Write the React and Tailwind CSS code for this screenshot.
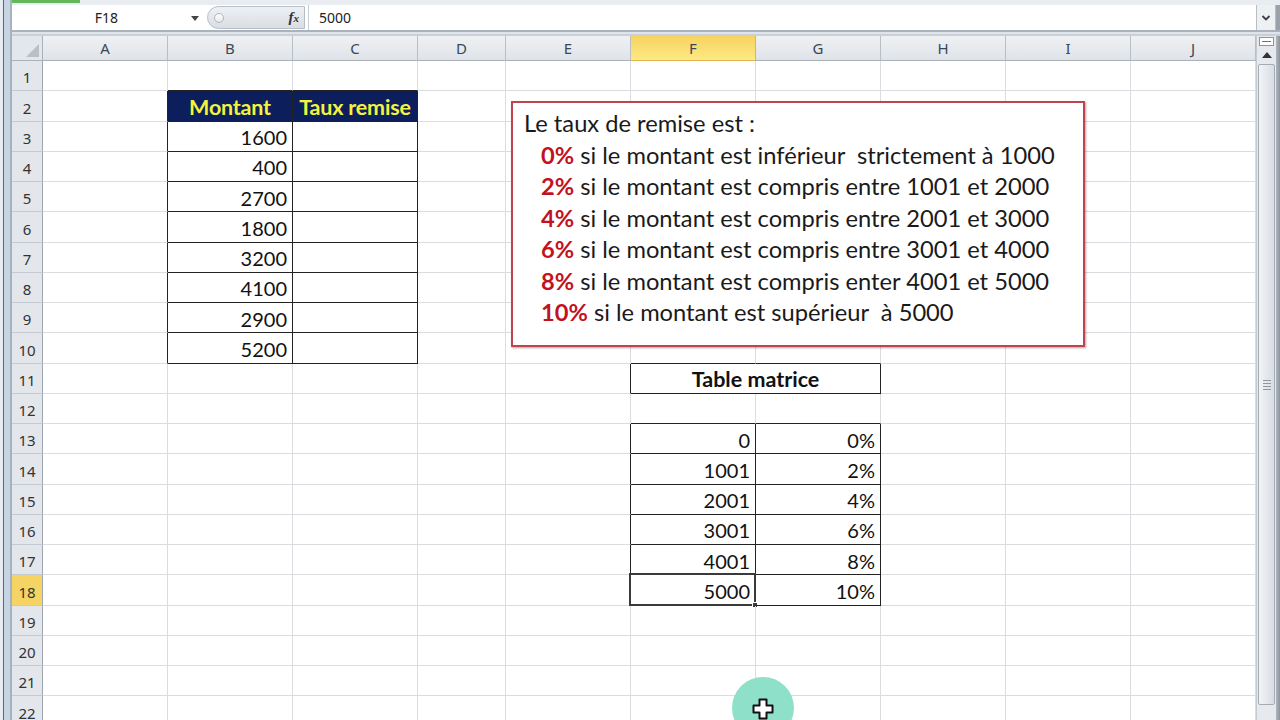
import React from "react";

const COLS = [
  { id: "A", w: "w-[125px]" },
  { id: "B", w: "w-[125px]" },
  { id: "C", w: "w-[125px]" },
  { id: "D", w: "w-[88px]" },
  { id: "E", w: "w-[125px]" },
  { id: "F", w: "w-[125px]" },
  { id: "G", w: "w-[125px]" },
  { id: "H", w: "w-[125px]" },
  { id: "I", w: "w-[125px]" },
  { id: "J", w: "w-[125px]" },
];

const ROWS = Array.from({ length: 22 }, (_, i) => i + 1);

// bordered ranges (row from/to, col index from/to)
const BOXES = [
  { r1: 2, r2: 10, c1: 1, c2: 2 },
  { r1: 11, r2: 11, c1: 5, c2: 6 },
  { r1: 13, r2: 18, c1: 5, c2: 6 },
];

const inBox = (r, c) =>
  BOXES.some((b) => r >= b.r1 && r <= b.r2 && c >= b.c1 && c <= b.c2);

const montants = [1600, 400, 2700, 1800, 3200, 4100, 2900, 5200];
const matrice = [
  ["0", "0%"],
  ["1001", "2%"],
  ["2001", "4%"],
  ["3001", "6%"],
  ["4001", "8%"],
  ["5000", "10%"],
];

const rules = [
  ["0%", "si le montant est inférieur  strictement à 1000"],
  ["2%", "si le montant est compris entre 1001 et 2000"],
  ["4%", "si le montant est compris entre 2001 et 3000"],
  ["6%", "si le montant est compris entre 3001 et 4000"],
  ["8%", "si le montant est compris enter 4001 et 5000"],
  ["10%", "si le montant est supérieur  à 5000"],
];

function cellContent(r, c) {
  if (r === 2 && c === 1) return { text: "Montant", kind: "head" };
  if (r === 2 && c === 2) return { text: "Taux remise", kind: "head" };
  if (c === 1 && r >= 3 && r <= 10) return { text: String(montants[r - 3]), kind: "num" };
  if (c === 2 && r >= 3 && r <= 10) return { text: "", kind: "empty" };
  if (r >= 13 && r <= 18 && c === 5) return { text: matrice[r - 13][0], kind: "num" };
  if (r >= 13 && r <= 18 && c === 6) return { text: matrice[r - 13][1], kind: "num" };
  return { text: "", kind: "empty" };
}

function Cell({ r, c }) {
  const right =
    inBox(r, c) || inBox(r, c + 1) ? "border-r-[#222]" : "border-r-[#dadcdf]";
  const bottom =
    inBox(r, c) || inBox(r + 1, c) ? "border-b-[#222]" : "border-b-[#dadcdf]";
  const { text, kind } = cellContent(r, c);
  const selected = r === 18 && c === 5;

  let look = "justify-end pr-[5px] text-[#111]";
  if (kind === "head")
    look = "justify-center bg-[#0c1f5c] text-[#f3f33c] font-bold text-[21.5px] tracking-[-0.2px]";

  return (
    <div
      className={`${COLS[c].w} relative flex shrink-0 items-center border-r border-b pt-[2px] ${right} ${bottom} ${look}`}
    >
      {text}
      {selected && (
        <div className="pointer-events-none absolute -top-[2px] -left-[2px] -right-[1px] -bottom-[1px] border-2 border-[#3a3a3a]">
          <div className="absolute inset-0 border border-white" />
          <div className="absolute -right-[4px] -bottom-[4px] h-[6px] w-[6px] border border-white bg-[#3a3a3a]" />
        </div>
      )}
    </div>
  );
}

function Row({ r }) {
  const cells = [];
  for (let c = 0; c < COLS.length; c++) {
    if (r === 11 && c === 5) {
      cells.push(
        <div
          key={c}
          className="flex w-[250px] shrink-0 items-center justify-center border-r border-b border-[#222] pt-[2px] text-[21.5px] font-bold text-[#111]"
        >
          Table matrice
        </div>
      );
      c++;
      continue;
    }
    cells.push(<Cell key={c} r={r} c={c} />);
  }
  return (
    <div className="flex h-[30.25px]">
      <div
        className={`flex w-[31px] shrink-0 items-center justify-center border-r border-b border-r-[#9ea7b1] border-b-[#c4cad1] pt-[4px] font-['Noto_Sans',sans-serif] text-[15px] text-[#333] ${
          r === 18 ? "bg-[#f6d463]" : "bg-[#e3e7ec]"
        }`}
      >
        {r}
      </div>
      {cells}
    </div>
  );
}

function ColumnHeader() {
  return (
    <div className="flex h-[25px] font-['Noto_Sans',sans-serif] text-[15px] text-[#3b4756]">
      <div className="relative w-[31px] shrink-0 border-r border-b border-[#a9b1ba] bg-[#e3e7ec]">
        <svg className="absolute right-[3px] bottom-[3px]" width="13" height="13" viewBox="0 0 13 13">
          <path d="M13 0 V13 H0 Z" fill="#b9bfc6" />
        </svg>
      </div>
      {COLS.map((col) => (
        <div
          key={col.id}
          className={`${col.w} flex shrink-0 items-center justify-center border-r border-b bg-gradient-to-b pt-[1px] ${
            col.id === "F"
              ? "border-[#e2b24e] from-[#f7d35f] to-[#fde983]"
              : "border-r-[#b8bec6] border-b-[#a9b1ba] from-[#eff1f4] to-[#dfe3e8]"
          }`}
        >
          {col.id}
        </div>
      ))}
    </div>
  );
}

function FormulaBar() {
  return (
    <div className="flex h-[27px] border-b-2 border-[#aab2bc] bg-white font-['Noto_Sans',sans-serif] text-[14px] text-[#222]">
      <div className="relative flex w-[193px] shrink-0 items-center justify-center pr-[4px]">
        F18
        <div className="absolute right-[6px] top-[11px] h-0 w-0 border-x-[4px] border-t-[5px] border-x-transparent border-t-[#444]" />
      </div>
      <div className="ml-[2px] my-[1px] flex w-[98px] shrink-0 items-center justify-between rounded-l-full border border-[#b7bec7] bg-gradient-to-b from-[#eef1f4] to-[#d9dee4] pl-[6px] pr-[5px]">
        <div className="h-[10px] w-[10px] rounded-full border border-[#b0b7c0] bg-gradient-to-b from-white to-[#e4e7eb]" />
        <span className="font-['Liberation_Serif',serif] text-[15px] font-bold italic text-[#333]">
          f<span className="text-[11px]">x</span>
        </span>
      </div>
      <div className="ml-[3px] flex flex-1 items-center border-l border-[#c7cdd4] pl-[10px]">
        5000
      </div>
      <div className="flex w-[20px] shrink-0 items-center justify-center border-x border-[#b7bec7] bg-[#eef1f4]">
        <svg width="10" height="8" viewBox="0 0 10 8">
          <path d="M1.5 2 L5 5.5 L8.5 2" fill="none" stroke="#3a3f45" strokeWidth="1.8" />
        </svg>
      </div>
      <div className="w-[4px] shrink-0 bg-[#9aa1a9]" />
    </div>
  );
}

function Scrollbar() {
  return (
    <div className="flex w-[24px] shrink-0">
      <div className="flex w-[20px] flex-col border-l border-[#c3cad2] bg-[#e6e9ed]">
        <div className="mx-[2px] mt-[1px] flex h-[9px] items-center justify-center border border-[#8c96a2] bg-white">
          <div className="h-[1px] w-[9px] bg-[#6b7480]" />
        </div>
        <div className="flex h-[17px] items-center justify-center">
          <div className="h-0 w-0 border-x-[5px] border-b-[6px] border-x-transparent border-b-[#2f343a]" />
        </div>
        <div className="mx-[1px] mt-[1px] flex flex-1 items-center justify-center rounded-[2px] border border-[#a4acb6] bg-gradient-to-r from-[#f2f4f7] to-[#d8dde3]">
          <div className="flex flex-col gap-[2px]">
            <div className="h-[1px] w-[8px] bg-[#8f98a3]" />
            <div className="h-[1px] w-[8px] bg-[#8f98a3]" />
            <div className="h-[1px] w-[8px] bg-[#8f98a3]" />
            <div className="h-[1px] w-[8px] bg-[#8f98a3]" />
          </div>
        </div>
        <div className="h-[15px]" />
      </div>
      <div className="w-[4px] bg-gradient-to-r from-[#b0b6bd] to-[#8e949b]" />
    </div>
  );
}

function NoteBox() {
  return (
    <div className="absolute left-[499px] top-[65px] h-[246px] w-[574px] border-2 border-[#c0444e] bg-white pl-[11px] pt-[5px] font-['Lato','Carlito',sans-serif] text-[23.7px] leading-[31.5px] text-[#1a1a1a] shadow-[1px_1px_2px_rgba(0,0,0,0.35)]">
      <div>Le taux de remise est :</div>
      {rules.map(([pct, txt]) => (
        <div key={pct} className="whitespace-pre pl-[17px]">
          <span className="font-bold text-[#c3121f]">{pct}</span> {txt}
        </div>
      ))}
    </div>
  );
}

function Cursor() {
  return (
    <div className="pointer-events-none absolute left-[732px] top-[677px] flex h-[62px] w-[62px] items-center justify-center rounded-full bg-[#8ee0c8]">
      <svg width="24" height="24" viewBox="0 0 24 24" className="mt-[1px]">
        <path
          d="M8.5 2.5 H15.5 V8.5 H21.5 V15.5 H15.5 V21.5 H8.5 V15.5 H2.5 V8.5 H8.5 Z"
          fill="#fff"
          stroke="#111"
          strokeWidth="2"
          strokeLinejoin="round"
        />
      </svg>
    </div>
  );
}

export default function App() {
  return (
    <div className="relative flex h-[720px] w-[1280px] overflow-hidden bg-white">
      {/* window edge */}
      <div className="flex w-[12px] shrink-0">
        <div className="w-[3px] bg-[#e8ecf0]" />
        <div className="w-[1px] bg-[#5f6670]" />
        <div className="w-[6px] bg-[#c6d4e4]" />
        <div className="w-[2px] bg-[#a7b2bf]" />
      </div>

      <div className="flex min-w-0 flex-1 flex-col">
        <div className="h-[5px] shrink-0 bg-[#e9edf1]">
          <div className="h-[3px] w-[68px] bg-[#64b85c]" />
        </div>
        <FormulaBar />
        <div className="h-[2px] shrink-0 bg-[#dfe4ea]" />
        <div className="h-[2px] shrink-0 bg-[#c9d0d8]" />

        <div className="flex min-h-0 flex-1">
          <div className="relative w-[1244px] shrink-0 font-['Lato','Carlito',sans-serif] text-[20px]">
            <ColumnHeader />
            {ROWS.map((r) => (
              <Row key={r} r={r} />
            ))}
            <NoteBox />
          </div>
          <Scrollbar />
        </div>
      </div>

      <Cursor />
    </div>
  );
}
